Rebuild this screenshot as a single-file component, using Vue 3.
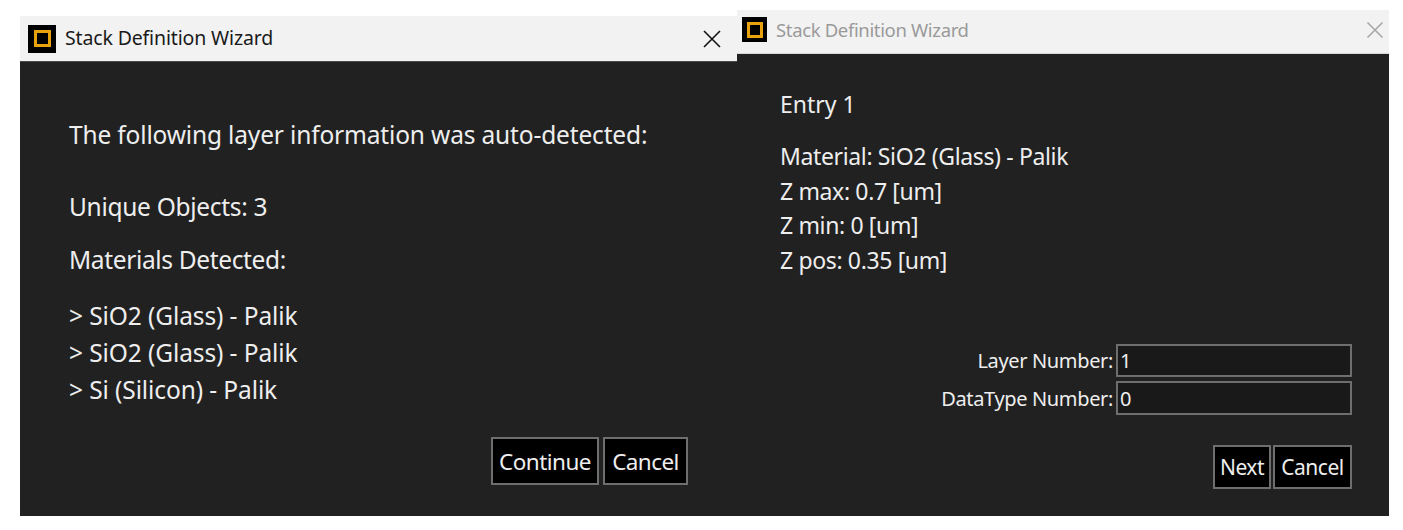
<script setup>
const leftLayers = ['> SiO2 (Glass) - Palik', '> SiO2 (Glass) - Palik', '> Si (Silicon) - Palik']
const rightInfo = ['Material: SiO2 (Glass) - Palik', 'Z max: 0.7 [um]', 'Z min: 0 [um]', 'Z pos: 0.35 [um]']
</script>

<template>
  <div class="screen">
    <section class="window window-left">
      <header class="titlebar">
        <span class="logo"><span class="logo-ring"></span></span>
        <span class="title">Stack Definition Wizard</span>
        <svg class="close" width="20" height="20" viewBox="0 0 20 20">
          <path d="M2 2 L18 18 M18 2 L2 18" stroke="#111" stroke-width="1.6" fill="none" />
        </svg>
      </header>
      <div class="body">
        <p class="heading">The following layer information was auto-detected:</p>
        <p class="unique">Unique Objects: 3</p>
        <p class="detected">Materials Detected:</p>
        <ul class="layers">
          <li v-for="(l, i) in leftLayers" :key="i">{{ l }}</li>
        </ul>
        <div class="actions">
          <button class="btn btn-continue">Continue</button>
          <button class="btn btn-cancel">Cancel</button>
        </div>
      </div>
    </section>

    <section class="window window-right">
      <header class="titlebar">
        <span class="logo"><span class="logo-ring"></span></span>
        <span class="title">Stack Definition Wizard</span>
        <svg class="close" width="18" height="18" viewBox="0 0 18 18">
          <path d="M1.5 1.5 L16.5 16.5 M16.5 1.5 L1.5 16.5" stroke="#a8a8a8" stroke-width="1.6" fill="none" />
        </svg>
      </header>
      <div class="body">
        <p class="entry">Entry 1</p>
        <ul class="info">
          <li v-for="(l, i) in rightInfo" :key="i">{{ l }}</li>
        </ul>
        <div class="form">
          <label class="field"><span>Layer Number:</span><input value="1" /></label>
          <label class="field"><span>DataType Number:</span><input value="0" /></label>
        </div>
        <div class="actions">
          <button class="btn btn-next">Next</button>
          <button class="btn btn-cancel">Cancel</button>
        </div>
      </div>
    </section>
  </div>
</template>

<style>
html, body { background: #fff; overflow: hidden; }
</style>

<style scoped>
.screen {
  display: flex;
  align-items: flex-end;
  width: 1403px;
  height: 516px;
  padding-left: 20px;
  box-sizing: border-box;
  font-family: "Noto Sans", "Open Sans", sans-serif;
  color: #eeeeee;
}
.window { display: flex; flex-direction: column; background: #212121; }
.window-left { width: 717px; height: 500px; }
.window-right { width: 652px; height: 506px; }

.titlebar { display: flex; align-items: center; background: #f2f2f2; flex: none; }
.window-left .titlebar { height: 46px; padding: 0 15px 0 8px; border-bottom: 1px solid #4a4a4a; box-sizing: border-box; }
.window-right .titlebar { height: 44px; padding: 0 5px 0 5px; border-bottom: 1px solid #d8d8d8; box-sizing: border-box; }

.logo { display: flex; align-items: center; justify-content: center; background: #000; flex: none; }
.window-left .logo { width: 28px; height: 28px; }
.window-right .logo { width: 25px; height: 25px; margin-top: -4px; }
.logo-ring { display: block; border: 3px solid #e8a20c; box-sizing: content-box; }
.window-left .logo-ring { width: 11px; height: 11px; }
.window-right .logo-ring { width: 10px; height: 10px; }

.title { flex: 1; white-space: nowrap; }
.window-left .title { color: #1a1a1a; margin-left: 9px; margin-top: -2px; font-size: 19.5px; letter-spacing: -0.15px; }
.window-right .title { color: #9a9a9a; margin-left: 9px; margin-top: -5px; font-size: 18.5px; letter-spacing: -0.35px; }
.window-right .close { margin-top: -3px; }

p, ul { margin: 0; padding: 0; list-style: none; white-space: nowrap; }

.window-left .body { display: flex; flex-direction: column; flex: 1; padding: 0 49px; font-size: 24.5px; letter-spacing: -0.25px; }
.heading { line-height: 36px; margin-top: 55px; letter-spacing: -0.16px; }
.unique { line-height: 36px; margin-top: 36px; letter-spacing: -0.3px; }
.detected { line-height: 36px; margin-top: 17px; letter-spacing: -0.35px; }
.layers { margin-top: 19px; }
.layers li { line-height: 37px; letter-spacing: -0.1px; }

.actions { display: flex; justify-content: flex-end; }
.window-left .actions { margin-top: 29px; gap: 4px; }
.btn {
  background: #000;
  color: #eeeeee;
  border: 2px solid #6e6e6e;
  font-family: inherit;
  padding: 0;
  box-sizing: border-box;
}
.window-left .btn { height: 48px; font-size: 22.5px; letter-spacing: -0.55px; }
.btn-continue { width: 108px; }
.window-left .btn-cancel { width: 85px; }

.window-right .body { display: flex; flex-direction: column; flex: 1; padding: 0 37px 0 43px; font-size: 23px; letter-spacing: -0.36px; }
.entry { line-height: 34px; margin-top: 33px; letter-spacing: 0; }
.info { margin-top: 18px; }
.info li { line-height: 34.7px; }
.form { display: flex; flex-direction: column; gap: 4px; margin-top: 66px; }
.field { display: flex; justify-content: flex-end; align-items: center; gap: 3px; font-size: 20px; letter-spacing: -0.35px; }
.field input {
  width: 236px;
  height: 33.5px;
  box-sizing: border-box;
  background: #191919;
  border: 2px solid #6e6e6e;
  color: #eeeeee;
  font-family: inherit;
  font-size: 20px;
  padding: 0 2px;
  outline: none;
}
.window-right .actions { margin-top: 30px; gap: 2px; }
.window-right .btn { height: 44px; font-size: 21px; letter-spacing: -0.5px; }
.btn-next { width: 58px; }
.window-right .btn-cancel { width: 79px; }
</style>
